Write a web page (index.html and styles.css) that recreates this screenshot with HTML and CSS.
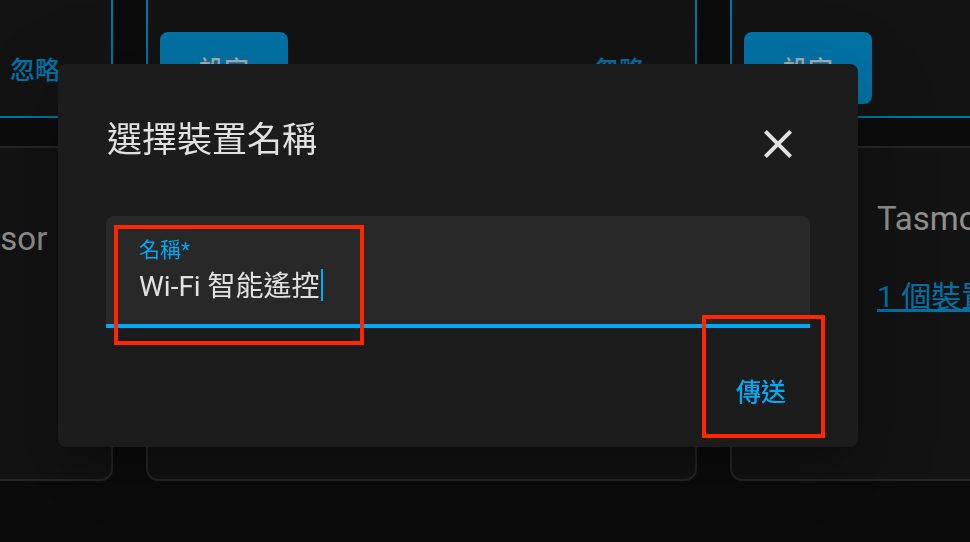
FILE: index.html
```html
<!DOCTYPE html>
<html lang="zh-Hant">
<head>
    <meta charset="utf-8">
    <title>選擇裝置名稱</title>
    <link rel="stylesheet" href="styles.css">
</head>
<body>
    <div class="board">
        <div class="card card-found">
            <div class="card-actions">
                <button class="btn btn-filled">設定</button>
                <button class="btn btn-text">忽略</button>
            </div>
        </div>
        <div class="card card-found">
            <div class="card-actions">
                <button class="btn btn-filled">設定</button>
                <button class="btn btn-text">忽略</button>
            </div>
        </div>
        <div class="card card-found">
            <div class="card-actions">
                <button class="btn btn-filled">設定</button>
                <button class="btn btn-text">忽略</button>
            </div>
        </div>

        <div class="card">
            <div class="card-header card-header-low">
                <div class="card-title">Supervisor</div>
            </div>
        </div>
        <div class="card">
            <div class="card-header">
                <div class="card-title">Shelly</div>
            </div>
        </div>
        <div class="card">
            <div class="card-header">
                <div class="card-title">Tasmota</div>
            </div>
            <a class="card-link" href="#">1 個裝置</a>
        </div>
    </div>

    <div class="scrim"></div>

    <div class="dialog">
        <div class="dialog-header">
            <h2 class="dialog-title">選擇裝置名稱</h2>
            <button class="dialog-close" aria-label="關閉">
                <svg width="48" height="48" viewBox="0 0 24 24"><path fill="currentColor" d="M19 6.41L17.59 5 12 10.59 6.41 5 5 6.41 10.59 12 5 17.59 6.41 19 12 13.41 17.59 19 19 17.59 13.41 12z"/></svg>
            </button>
        </div>
        <div class="field">
            <div class="field-label">名稱*</div>
            <div class="field-input">Wi-Fi 智能遙控<span class="caret"></span></div>
        </div>
        <div class="dialog-actions">
            <button class="btn-submit">傳送</button>
        </div>
    </div>

    <!-- annotation boxes -->
    <div class="mark mark-field"></div>
    <div class="mark mark-submit"></div>
</body>
</html>
```

FILE: styles.css
```css
body {
    margin: 0;
    width: 970px;
    height: 542px;
    overflow: hidden;
    background-color: #111111;
    font-family: Roboto, "Noto Sans CJK TC", sans-serif;
    color: #e1e1e1;
}
.board {
    display: grid;
    grid-template-columns: 369px 551px 551px;
    grid-template-rows: 148px 335px;
    column-gap: 33px;
    row-gap: 28px;
    margin: -30px 0 0 -256px;
}
.card {
    box-sizing: border-box;
    background-color: #1c1c1c;
    border: 2px solid #3a3a3a;
    border-radius: 12px;
}
.card-found {
    display: flex;
    flex-direction: column;
    justify-content: flex-end;
    border-color: #03a9f4;
}
.card-actions {
    display: flex;
    justify-content: space-between;
    align-items: center;
    padding: 0 12px 12px;
}
.btn {
    width: 128px;
    height: 72px;
    border: none;
    border-radius: 8px;
    font-family: inherit;
    font-size: 25px;
    font-weight: 500;
}
.btn-filled {
    background-color: #03a9f4;
    color: #ffffff;
}
.btn-text {
    background: none;
    color: #03a9f4;
}
.card-header {
    display: flex;
    align-items: center;
    min-height: 80px;
    padding: 31px 24px 0 145px;
}
.card-header-low {
    padding-top: 51px;
}
.card-title {
    font-size: 33px;
    line-height: 40px;
    color: #d4d4d4;
}
.card-link {
    display: inline-block;
    margin: 18px 0 0 145px;
    font-size: 30px;
    line-height: 40px;
    color: #03a9f4;
}
.scrim {
    position: fixed;
    inset: 0;
    background-color: rgba(0,0,0,0.32);
    z-index: 1;
}
.dialog {
    position: fixed;
    left: 58px;
    top: 64px;
    width: 800px;
    box-sizing: border-box;
    padding: 48px 48px 18px;
    background-color: #1c1c1c;
    border-radius: 8px;
    box-shadow: 0 22px 30px -14px rgba(0,0,0,0.2), 0 48px 76px 6px rgba(0,0,0,0.14), 0 18px 92px 16px rgba(0,0,0,0.12);
    z-index: 2;
}
.dialog-header {
    display: flex;
    justify-content: space-between;
    align-items: flex-start;
    height: 64px;
}
.dialog-title {
    margin: 5px 0 0 1px;
    font-size: 35px;
    line-height: 48px;
    font-weight: 400;
    color: #e1e1e1;
}
.dialog-close {
    display: flex;
    align-items: center;
    justify-content: center;
    width: 64px;
    height: 64px;
    padding: 0;
    border: none;
    background: none;
    color: #e1e1e1;
}
.field {
    margin-top: 40px;
    padding: 22px 33px 19px;
    background-color: #282828;
    border-radius: 8px 8px 0 0;
    border-bottom: 4px solid #03a9f4;
}
.field-label {
    font-size: 21px;
    line-height: 24px;
    color: #03a9f4;
}
.field-input {
    margin-top: 7px;
    font-size: 28px;
    line-height: 36px;
    color: #e1e1e1;
}
.caret {
    display: inline-block;
    width: 2px;
    height: 32px;
    margin-left: 1px;
    vertical-align: -5px;
    background-color: #03a9f4;
}
.dialog-actions {
    display: flex;
    justify-content: flex-end;
    margin-top: 29px;
    padding-right: 8px;
}
.btn-submit {
    height: 72px;
    padding: 0 16px;
    border: none;
    background: none;
    font-family: inherit;
    font-size: 25px;
    line-height: 36px;
    font-weight: 500;
    color: #03a9f4;
}
.mark {
    position: fixed;
    box-sizing: border-box;
    border: 4px solid #ff2600;
    z-index: 3;
}
.mark-field {
    left: 114px;
    top: 225px;
    width: 250px;
    height: 120px;
}
.mark-submit {
    left: 702px;
    top: 315px;
    width: 123px;
    height: 123px;
}
```
